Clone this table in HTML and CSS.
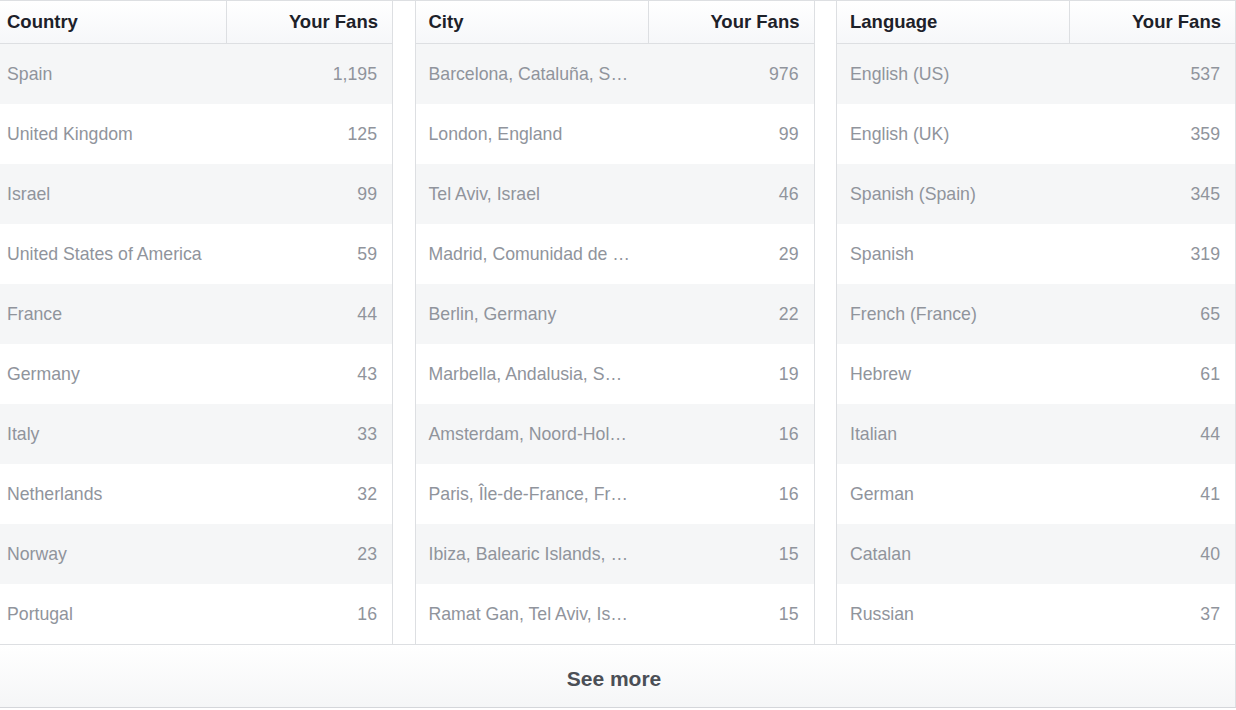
FILE: index.html
```html
<!DOCTYPE html>
<html lang="en">
<head>
<meta charset="utf-8">
<title>Your Fans</title>
<link rel="stylesheet" href="styles.css">
</head>
<body>
<div class="panel">
  <div class="tables">
    <div class="table">
      <div class="head"><div class="hname">Country</div><div class="hval">Your Fans</div></div>
      <div class="row"><div class="name">Spain</div><div class="val">1,195</div></div>
      <div class="row"><div class="name">United Kingdom</div><div class="val">125</div></div>
      <div class="row"><div class="name">Israel</div><div class="val">99</div></div>
      <div class="row"><div class="name">United States of America</div><div class="val">59</div></div>
      <div class="row"><div class="name">France</div><div class="val">44</div></div>
      <div class="row"><div class="name">Germany</div><div class="val">43</div></div>
      <div class="row"><div class="name">Italy</div><div class="val">33</div></div>
      <div class="row"><div class="name">Netherlands</div><div class="val">32</div></div>
      <div class="row"><div class="name">Norway</div><div class="val">23</div></div>
      <div class="row"><div class="name">Portugal</div><div class="val">16</div></div>
    </div>
    <div class="table">
      <div class="head"><div class="hname">City</div><div class="hval">Your Fans</div></div>
      <div class="row"><div class="name">Barcelona, Cataluña, S…</div><div class="val">976</div></div>
      <div class="row"><div class="name">London, England</div><div class="val">99</div></div>
      <div class="row"><div class="name">Tel Aviv, Israel</div><div class="val">46</div></div>
      <div class="row"><div class="name">Madrid, Comunidad de …</div><div class="val">29</div></div>
      <div class="row"><div class="name">Berlin, Germany</div><div class="val">22</div></div>
      <div class="row"><div class="name">Marbella, Andalusia, S…</div><div class="val">19</div></div>
      <div class="row"><div class="name">Amsterdam, Noord-Hol…</div><div class="val">16</div></div>
      <div class="row"><div class="name">Paris, Île-de-France, Fr…</div><div class="val">16</div></div>
      <div class="row"><div class="name">Ibiza, Balearic Islands, …</div><div class="val">15</div></div>
      <div class="row"><div class="name">Ramat Gan, Tel Aviv, Is…</div><div class="val">15</div></div>
    </div>
    <div class="table">
      <div class="head"><div class="hname">Language</div><div class="hval">Your Fans</div></div>
      <div class="row"><div class="name">English (US)</div><div class="val">537</div></div>
      <div class="row"><div class="name">English (UK)</div><div class="val">359</div></div>
      <div class="row"><div class="name">Spanish (Spain)</div><div class="val">345</div></div>
      <div class="row"><div class="name">Spanish</div><div class="val">319</div></div>
      <div class="row"><div class="name">French (France)</div><div class="val">65</div></div>
      <div class="row"><div class="name">Hebrew</div><div class="val">61</div></div>
      <div class="row"><div class="name">Italian</div><div class="val">44</div></div>
      <div class="row"><div class="name">German</div><div class="val">41</div></div>
      <div class="row"><div class="name">Catalan</div><div class="val">40</div></div>
      <div class="row"><div class="name">Russian</div><div class="val">37</div></div>
    </div>
  </div>
  <div class="footer">See more</div>
</div>
</body>
</html>
```

FILE: styles.css
```css
html, body {
  margin: 0;
  padding: 0;
  background: #ffffff;
}

body {
  font-family: "Liberation Sans", Arial, Helvetica, sans-serif;
  overflow: hidden;
}

.panel {
  width: 1243px;
  margin-left: -7px;
  box-sizing: border-box;
  border-top: 1px solid #dddfe2;
  border-bottom: 1px solid #d4d6da;
  background: #ffffff;
}

.tables {
  display: flex;
  justify-content: space-between;
}

.table {
  width: 400px;
  box-sizing: border-box;
  border-left: 1px solid #dddfe2;
  border-right: 1px solid #dddfe2;
}

.head {
  display: flex;
  height: 42px;
  border-bottom: 1px solid #dddfe2;
  background: linear-gradient(#ffffff, #f6f7f9);
  font-weight: bold;
  font-size: 18.5px;
  color: #1d2129;
}

.hname {
  width: 233px;
  box-sizing: border-box;
  padding: 0 13px;
  border-right: 1px solid #dddfe2;
  display: flex;
  align-items: center;
}

.hval {
  flex: 1;
  padding: 0 14px;
  display: flex;
  align-items: center;
  justify-content: flex-end;
}

.row {
  display: flex;
  align-items: center;
  height: 60px;
  font-size: 17.7px;
  color: #90949c;
}

.row:nth-child(even) {
  background: #f5f6f7;
}

.name {
  width: 233px;
  box-sizing: border-box;
  padding: 0 0 0 13px;
  white-space: nowrap;
}

.val {
  flex: 1;
  padding: 0 15px;
  text-align: right;
}

.footer {
  height: 63px;
  box-sizing: border-box;
  padding-top: 5px;
  border-top: 1px solid #dddfe2;
  border-right: 1px solid #dddfe2;
  background: linear-gradient(#ffffff, #f5f6f7);
  display: flex;
  align-items: center;
  justify-content: center;
  font-weight: bold;
  font-size: 21px;
  color: #4b4f56;
}
```
